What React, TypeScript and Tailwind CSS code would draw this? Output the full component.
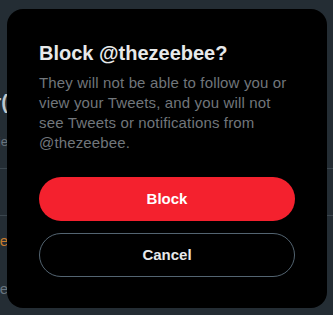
const font = { fontFamily: '"Liberation Sans", Arial, sans-serif' };

function EdgeText({ text, className }: { text: string; className: string }) {
  return (
    <div className="flex w-[8px] justify-end overflow-hidden">
      <span className={`whitespace-nowrap ${className}`}>{text}</span>
    </div>
  );
}

export default function App() {
  return (
    <div className="relative h-[315px] w-[333px] overflow-hidden bg-[#242d34]" style={font}>
      {/* dimmed page behind the dialog */}
      <div className="flex flex-col pt-[90px]">
        <EdgeText text="Docker(" className="text-[20px] font-bold leading-6 text-[#bdc6cd]" />
        <div className="h-[20px]" />
        <EdgeText text="Verifie" className="text-[13px] leading-4 text-[#68747e]" />
        <div className="mt-[18px] h-px bg-[#3b464e]" />
        <div className="h-[46px]" />
        <div className="h-px bg-[#3b464e]" />
        <div className="mt-[15px]">
          <EdgeText text="Show more" className="text-[15px] leading-5 text-[#c67a2c]" />
        </div>
        <div className="mt-[28px] flex">
          <EdgeText text="Type" className="text-[15px] leading-5 text-[#68747e]" />
        </div>
      </div>

      {/* dialog */}
      <div className="absolute left-[7px] top-[9px] flex w-[320px] flex-col rounded-2xl bg-black px-8 pb-[31px] pt-8">
        <h2 className="text-[20px] font-bold leading-6 text-[#e7e9ea]">Block @thezeebee?</h2>
        <p className="mt-2 max-w-[250px] text-[15px] leading-5 tracking-[0.15px] text-[#71767b]">
          They will not be able to follow you or view your Tweets, and you will not see Tweets or
          notifications from @thezeebee.
        </p>
        <button className="mt-6 flex h-[44px] items-center justify-center rounded-full bg-[#f4212e] text-[15px] font-bold text-white">
          Block
        </button>
        <button className="mt-3 flex h-[44px] items-center justify-center rounded-full border border-[#536471] text-[15px] font-bold text-[#e7e9ea]">
          Cancel
        </button>
      </div>
    </div>
  );
}
